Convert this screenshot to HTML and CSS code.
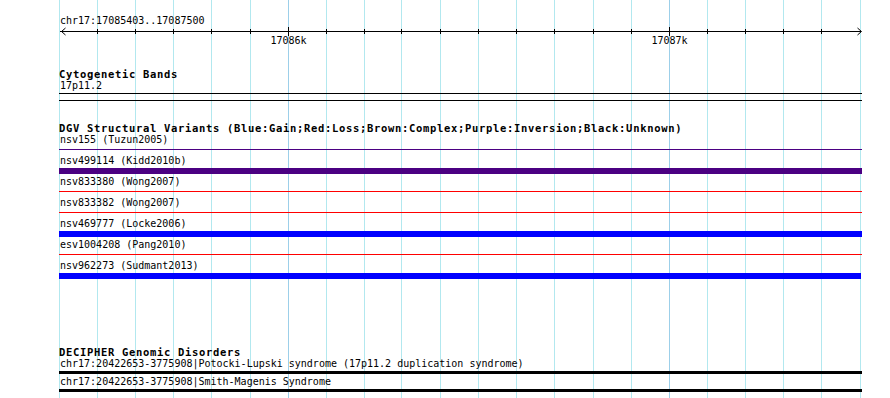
FILE: index.html
```html
<!DOCTYPE html>
<html lang="en">
<head>
    <meta charset="UTF-8">
    <title>GBrowse - chr17:17085403..17087500</title>
    <link rel="stylesheet" href="styles.css">
</head>
<body>
<div class="panel">
    <!-- grid lines, every 100 bp -->
    <svg class="grid" width="890" height="398">
        <rect class="gl" x="59" y="0" width="1" height="398"/>
        <rect class="gl" x="97" y="0" width="1" height="398"/>
        <rect class="gl" x="135" y="0" width="1" height="398"/>
        <rect class="gl" x="173" y="0" width="1" height="398"/>
        <rect class="gl" x="211" y="0" width="1" height="398"/>
        <rect class="gl" x="250" y="0" width="1" height="398"/>
        <rect class="gl major" x="288" y="0" width="1" height="398"/>
        <rect class="gl" x="326" y="0" width="1" height="398"/>
        <rect class="gl" x="364" y="0" width="1" height="398"/>
        <rect class="gl" x="401" y="0" width="1" height="398"/>
        <rect class="gl" x="440" y="0" width="1" height="398"/>
        <rect class="gl" x="478" y="0" width="1" height="398"/>
        <rect class="gl" x="516" y="0" width="1" height="398"/>
        <rect class="gl" x="554" y="0" width="1" height="398"/>
        <rect class="gl" x="593" y="0" width="1" height="398"/>
        <rect class="gl" x="631" y="0" width="1" height="398"/>
        <rect class="gl major" x="669" y="0" width="1" height="398"/>
        <rect class="gl" x="707" y="0" width="1" height="398"/>
        <rect class="gl" x="745" y="0" width="1" height="398"/>
        <rect class="gl" x="783" y="0" width="1" height="398"/>
        <rect class="gl" x="821" y="0" width="1" height="398"/>
        <rect class="gl" x="860" y="0" width="1" height="398"/>
    </svg>

    <div class="tracks">
        <div class="label">chr17:17085403..17087500</div>
        <svg class="ruler" width="803" height="20">
            <rect x="1" y="4" width="801" height="1"/>
            <polyline class="arrow" points="6.5,1 2.5,4.5 6.5,8"/>
            <polyline class="arrow" points="798.5,1 802.5,4.5 798.5,8"/>
            <rect x="38" y="2" width="1" height="5"/>
            <rect x="76" y="2" width="1" height="5"/>
            <rect x="114" y="2" width="1" height="5"/>
            <rect x="152" y="2" width="1" height="5"/>
            <rect x="191" y="2" width="1" height="5"/>
            <rect x="229" y="0" width="1" height="9"/>
            <rect x="267" y="2" width="1" height="5"/>
            <rect x="305" y="2" width="1" height="5"/>
            <rect x="342" y="2" width="1" height="5"/>
            <rect x="381" y="2" width="1" height="5"/>
            <rect x="419" y="2" width="1" height="5"/>
            <rect x="457" y="2" width="1" height="5"/>
            <rect x="495" y="2" width="1" height="5"/>
            <rect x="534" y="2" width="1" height="5"/>
            <rect x="572" y="2" width="1" height="5"/>
            <rect x="610" y="0" width="1" height="9"/>
            <rect x="648" y="2" width="1" height="5"/>
            <rect x="686" y="2" width="1" height="5"/>
            <rect x="724" y="2" width="1" height="5"/>
            <rect x="762" y="2" width="1" height="5"/>
            <text class="tick-label" x="229.5" y="17">17086k</text>
            <text class="tick-label" x="610.5" y="17">17087k</text>
        </svg>

        <div class="track cyto">
            <div class="title">Cytogenetic Bands</div>
            <div class="label">17p11.2</div>
            <div class="band"></div>
        </div>

        <div class="track dgv">
            <div class="title">DGV Structural Variants (Blue:Gain;Red:Loss;Brown:Complex;Purple:Inversion;Black:Unknown)</div>
            <div class="row">
                <div class="label">nsv155 (Tuzun2005)</div>
                <div class="line purple"></div>
            </div>
            <div class="row">
                <div class="label">nsv499114 (Kidd2010b)</div>
                <div class="bar purple"></div>
            </div>
            <div class="row">
                <div class="label">nsv833380 (Wong2007)</div>
                <div class="line red"></div>
            </div>
            <div class="row">
                <div class="label">nsv833382 (Wong2007)</div>
                <div class="line red"></div>
            </div>
            <div class="row">
                <div class="label">nsv469777 (Locke2006)</div>
                <div class="bar blue"></div>
            </div>
            <div class="row">
                <div class="label">esv1004208 (Pang2010)</div>
                <div class="line red"></div>
            </div>
            <div class="row">
                <div class="label">nsv962273 (Sudmant2013)</div>
                <div class="bar blue short"></div>
            </div>
        </div>

        <div class="track decipher">
            <div class="title">DECIPHER Genomic Disorders</div>
            <div class="drow">
                <div class="label">chr17:20422653-3775908|Potocki-Lupski syndrome (17p11.2 duplication syndrome)</div>
                <div class="dbar"></div>
            </div>
            <div class="drow">
                <div class="label">chr17:20422653-3775908|Smith-Magenis Syndrome</div>
                <div class="dbar"></div>
            </div>
        </div>
    </div>
</div>
</body>
</html>
```

FILE: styles.css
```css
* {
    margin: 0;
    padding: 0;
    box-sizing: border-box;
}

body {
    background-color: #ffffff;
    color: #000000;
    font-family: "DejaVu Sans Mono", "Liberation Mono", monospace;
}

.panel {
    position: relative;
    width: 890px;
    height: 398px;
    overflow: hidden;
}

/* grid sits behind the tracks */
.grid {
    position: absolute;
    left: 0;
    top: 0;
}

.gl {
    fill: #b2e8ef;
}

.gl.major {
    fill: #9ccfe9;
}

.tracks {
    position: relative;
    margin-left: 59px;
    width: 803px;
    padding-top: 15px;
}

.label {
    font-size: 10px;
    line-height: 12px;
    height: 12px;
    padding-left: 1px;
    white-space: nowrap;
}

.title {
    font-size: 10.5px;
    font-weight: bold;
    letter-spacing: 0.68px;
    line-height: 12px;
    height: 12px;
    white-space: nowrap;
}

/* ruler */
.ruler {
    display: block;
}

.ruler rect {
    fill: #000000;
}

.arrow {
    fill: none;
    stroke: #000000;
    stroke-width: 1;
}

.tick-label {
    font-family: "DejaVu Sans Mono", "Liberation Mono", monospace;
    font-size: 10px;
    text-anchor: middle;
    fill: #000000;
}

/* tracks */
.cyto {
    margin-top: 21px;
}

.band {
    margin-top: 1px;
    height: 8px;
    border-top: 1px solid #000000;
    border-bottom: 1px solid #000000;
}

.dgv {
    margin-top: 21px;
}

.row {
    height: 21px;
}

.line {
    margin-top: 3px;
    height: 1px;
}

.bar {
    margin-top: 1px;
    height: 6px;
}

.bar.short {
    width: 802px;
}

.purple {
    background-color: #4b0082;
}

.red {
    background-color: #ff0000;
}

.blue {
    background-color: #0000ff;
}

.decipher {
    margin-top: 65px;
}

.drow {
    height: 18px;
}

.dbar {
    margin-top: 1px;
    height: 3px;
    background-color: #000000;
}
```
